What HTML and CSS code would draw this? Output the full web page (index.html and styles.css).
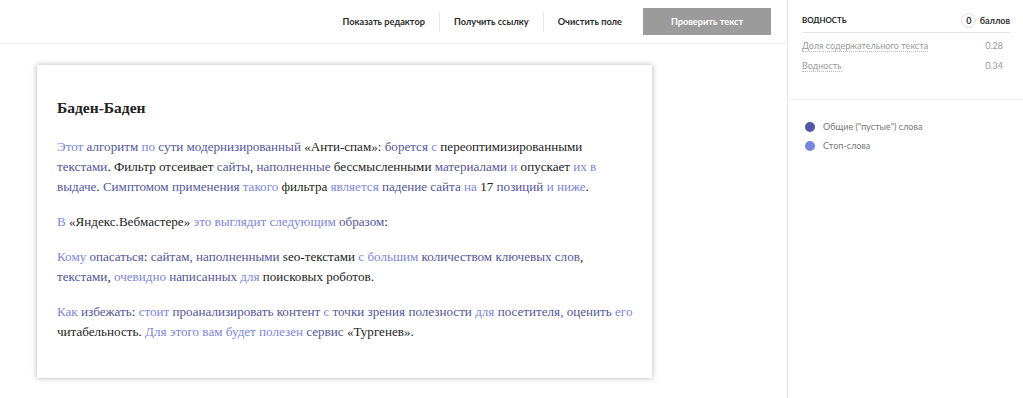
FILE: index.html
```html
<!DOCTYPE html>
<html lang="ru">

<head>
    <meta charset="UTF-8">
    <meta name="viewport" content="width=device-width, initial-scale=1.0">
    <title>Водность текста</title>
    <link rel="stylesheet" href="styles.css">
</head>

<body>
    <div class="main">
        <div class="toolbar">
            <a class="tool">Показать редактор</a>
            <span class="sep"></span>
            <a class="tool">Получить ссылку</a>
            <span class="sep"></span>
            <a class="tool">Очистить поле</a>
            <button class="check">Проверить текст</button>
        </div>

        <div class="content">
            <div class="doc">
                <h3>Баден-Баден</h3>
                <p><span class="s">Этот</span> <span class="c">алгоритм</span> <span class="s">по</span> <span class="c">сути модернизированный</span> «Анти-спам»: <span class="c">борется</span> <span class="s">с</span> переоптимизированными <span class="c">текстами</span>. Фильтр отсеивает <span class="c">сайты</span>, <span class="c">наполненные</span> бессмысленными <span class="c">материалами</span> <span class="s">и</span> опускает <span class="s">их в</span> <span class="c">выдаче</span>. <span class="c">Симптомом применения</span> <span class="s">такого</span> фильтра <span class="s">является</span> <span class="c">падение сайта</span> <span class="s">на</span> 17 <span class="c">позиций</span> <span class="s">и ниже</span>.</p>
                <p><span class="s">В</span> «Яндекс.Вебмастере» <span class="s">это выглядит следующим</span> <span class="c">образом</span>:</p>
                <p><span class="s">Кому</span> <span class="c">опасаться</span>: <span class="c">сайтам, наполненными</span> seo-текстами <span class="s">с большим</span> <span class="c">количеством ключевых слов</span>, <span class="c">текстами</span>, <span class="s">очевидно</span> <span class="c">написанных</span> <span class="s">для</span> поисковых роботов.</p>
                <p><span class="s">Как</span> <span class="c">избежать</span>: <span class="s">стоит</span> <span class="c">проанализировать контент</span> <span class="s">с</span> <span class="c">точки зрения полезности</span> <span class="s">для</span> <span class="c">посетителя, оценить</span> <span class="s">его</span> читабельность. <span class="s">Для этого вам будет полезен</span> <span class="c">сервис</span> «Тургенев».</p>
            </div>
        </div>
    </div>

    <div class="panel">
        <div class="score">
            <div class="score-head">
                <span class="title">Водность</span>
                <span class="points"><span class="num">0</span> баллов</span>
            </div>
            <div class="row">
                <span class="label">Доля содержательного текста</span>
                <span class="value">0.28</span>
            </div>
            <div class="row">
                <span class="label">Водность</span>
                <span class="value">0.34</span>
            </div>
        </div>
        <div class="legend">
            <div class="item"><span class="dot dark"></span>Общие ("пустые") слова</div>
            <div class="item"><span class="dot light"></span>Стоп-слова</div>
        </div>
    </div>
</body>

</html>
```

FILE: styles.css
```css
body {
    margin: 0;
    display: flex;
    height: 398px;
    background-color: #fff;
    font-family: Lato, "Open Sans", sans-serif;
    color: #333;
    overflow: hidden;
}

.main {
    flex: 1;
    display: flex;
    flex-direction: column;
}

.toolbar {
    height: 44px;
    box-sizing: border-box;
    border-bottom: 1px solid #ebebeb;
    display: flex;
    align-items: center;
    justify-content: flex-end;
    padding-right: 16px;
}

.toolbar .tool {
    font-size: 9.2px;
    font-weight: bold;
    color: #2b2b2b;
    padding: 0 14px;
    cursor: pointer;
}

.toolbar .sep {
    width: 1px;
    height: 20px;
    background-color: #e8e8e8;
}

.toolbar .check {
    margin-left: 7px;
    width: 128px;
    height: 27px;
    border: none;
    background-color: #9b9b9b;
    color: #fff;
    font-family: inherit;
    font-size: 9.2px;
    font-weight: bold;
    cursor: pointer;
}

.content {
    flex: 1;
    padding: 21px 0 0 37px;
}

.doc {
    width: 615px;
    height: 313px;
    box-sizing: border-box;
    padding: 33px 14px 0 20px;
    background-color: #fff;
    box-shadow: 0 0 6px 0 rgba(0, 0, 0, 0.3);
    font-family: "Liberation Serif", serif;
    font-size: 13.1px;
    line-height: 20px;
    color: #222;
}

.doc h3 {
    margin: 0 0 19px;
    font-size: 15.5px;
}

.doc p {
    margin: 0 0 15px;
}

.doc .c {
    color: #54569a;
}

.doc .s {
    color: #7c86dc;
}

/* right panel */

.panel {
    width: 236px;
    box-sizing: border-box;
    border-left: 1px solid #e6e6e6;
}

.score {
    padding: 8px 13px 0 14px;
    height: 100px;
    box-sizing: border-box;
    border-bottom: 1px solid #eee;
}

.score-head {
    display: flex;
    justify-content: space-between;
    align-items: center;
    height: 24px;
    border-bottom: 1px solid #e6e6e6;
    margin-bottom: 3px;
}

.score-head .title {
    text-transform: uppercase;
    font-size: 7.8px;
    font-weight: bold;
    color: #222;
}

.score-head .points {
    font-size: 9px;
    font-weight: bold;
    color: #333;
}

.score-head .num {
    display: inline-block;
    width: 13px;
    height: 13px;
    line-height: 13px;
    border: 1px solid #ddd;
    border-radius: 50%;
    text-align: center;
    margin-right: 1px;
}

.row {
    display: flex;
    justify-content: space-between;
    font-size: 9px;
    color: #9a9a9a;
    height: 20px;
    line-height: 20px;
}

.row .label {
    line-height: 11px;
    align-self: center;
    border-bottom: 1px dotted #bbb;
}

.row .value {
    padding-right: 7px;
}

.legend {
    padding: 17px 0 0 17px;
}

.legend .item {
    display: flex;
    align-items: center;
    font-size: 9px;
    color: #777;
    height: 19px;
}

.legend .dot {
    width: 10px;
    height: 10px;
    border-radius: 50%;
    margin-right: 8px;
}

.legend .dot.dark {
    background-color: #5456a8;
}

.legend .dot.light {
    background-color: #7685e0;
}
```
